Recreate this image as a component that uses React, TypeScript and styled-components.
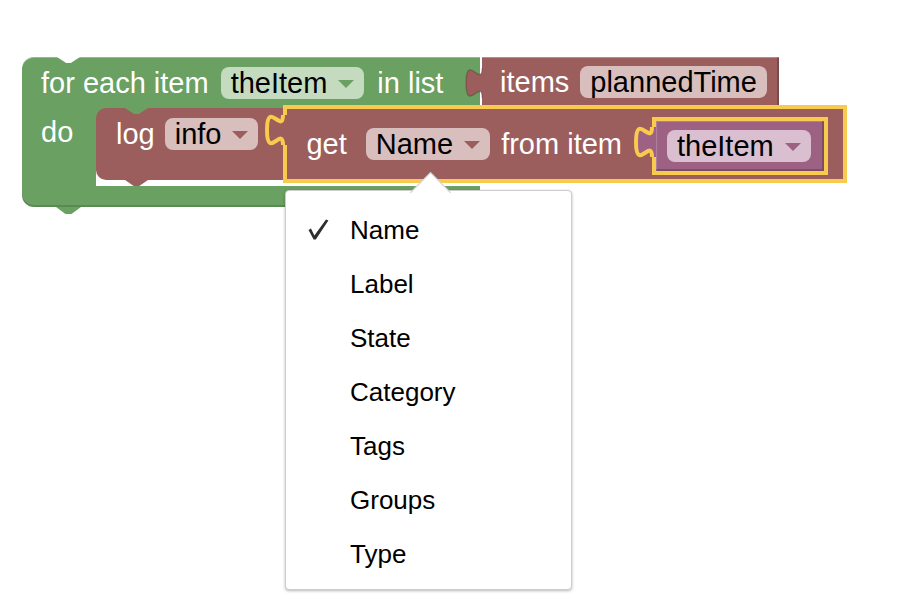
import React from "react";
import styled, { createGlobalStyle, css } from "styled-components";

const GREEN = "#6aa061";
const RED = "#9b5e5c";
const PURPLE = "#9c6183";
const YELLOW = "#f8ca4e";

const GlobalStyle = createGlobalStyle`
  body {
    margin: 0;
    background: #fff;
    font-family: "Liberation Sans", Arial, sans-serif;
  }
`;

const Workspace = styled.div`
  position: relative;
  width: 924px;
  height: 612px;
  overflow: hidden;
  background: #fff;
`;

const lightTop = css`
  box-shadow: inset 0 1px 0 rgba(255, 255, 255, 0.28);
`;

// for-each block sits on the canvas at its own coordinates
const LoopBlock = styled.div`
  position: absolute;
  left: 22px;
  top: 57px;
  display: flex;
  flex-direction: column;
  align-items: flex-start;
`;

const LoopRow = styled.div`
  display: flex;
  align-items: flex-start;
`;

const LoopHead = styled.div`
  position: relative;
  display: flex;
  align-items: flex-start;
  width: 458px;
  height: 51px;
  box-sizing: border-box;
  padding: 10px 0 0 19px;
  background: ${GREEN};
  border-radius: 12px 0 0 0;
  ${lightTop}

  &::before {
    content: "";
    position: absolute;
    top: 0;
    left: 35px;
    width: 23px;
    height: 6px;
    background: #fff;
    clip-path: polygon(0 0, 100% 0, 60% 100%, 40% 100%);
  }
`;

const LoopArm = styled.div`
  width: 74px;
  height: 78px;
  box-sizing: border-box;
  padding: 8px 0 0 19px;
  background: ${GREEN};
`;

const StatementSlot = styled.div`
  display: flex;
  align-items: flex-start;
  height: 78px;
  background: linear-gradient(${GREEN} 0 24px, transparent 24px);
`;

const LoopFoot = styled.div`
  position: relative;
  width: 458px;
  height: 21px;
  background: ${GREEN};
  border-radius: 0 0 0 12px;
  box-shadow: inset 0 -2px 0 rgba(0, 0, 0, 0.14);

  &::after {
    content: "";
    position: absolute;
    top: 100%;
    left: 34px;
    width: 25px;
    height: 7px;
    background: ${GREEN};
    clip-path: polygon(0 0, 100% 0, 62% 100%, 38% 100%);
  }
`;

const Label = styled.span<{ $gap?: number }>`
  margin-left: ${(p) => p.$gap ?? 0}px;
  color: #fff;
  font-size: 29px;
  line-height: 32px;
  white-space: nowrap;
`;

const Field = styled.span<{ $tint: string; $gap?: number }>`
  display: inline-flex;
  align-items: center;
  gap: 11px;
  flex: none;
  height: 32px;
  margin-left: ${(p) => p.$gap ?? 0}px;
  padding: 0 10px;
  border-radius: 8px;
  background: ${(p) => p.$tint};
  color: #000;
  font-size: 29px;
  line-height: 32px;
  white-space: nowrap;
`;

const Caret = styled.span<{ $color: string }>`
  width: 0;
  height: 0;
  margin-top: 2px;
  border-left: 8px solid transparent;
  border-right: 8px solid transparent;
  border-top: 8px solid ${(p) => p.$color};
`;

const ValueBlock = styled.div`
  position: relative;
  display: flex;
  align-items: flex-start;
  height: 48px;
  box-sizing: border-box;
  margin-left: 2px;
  padding: 9px 12px 0 18px;
  background: ${RED};
  box-shadow: inset 0 1px 0 rgba(255, 255, 255, 0.28),
    inset -2px 0 0 rgba(0, 0, 0, 0.2);
`;

const LogBlock = styled.div`
  position: relative;
  display: flex;
  align-items: flex-start;
  height: 72px;
  box-sizing: border-box;
  padding: 10px 0 0 20px;
  background: ${RED};
  border-radius: 10px 0 0 10px;

  &::before {
    content: "";
    position: absolute;
    top: 0;
    left: 29px;
    width: 23px;
    height: 6px;
    background: ${GREEN};
    clip-path: polygon(0 0, 100% 0, 60% 100%, 40% 100%);
  }

  &::after {
    content: "";
    position: absolute;
    top: 100%;
    left: 29px;
    width: 23px;
    height: 6px;
    background: ${RED};
    clip-path: polygon(0 0, 100% 0, 62% 100%, 38% 100%);
  }
`;

const GetBlock = styled.div<{ $gap: number }>`
  position: relative;
  display: flex;
  align-items: center;
  height: 78px;
  box-sizing: border-box;
  margin: -13px 0 0 ${(p) => p.$gap}px;
  padding: 0 15px 0 19px;
  border: 4px solid ${YELLOW};
  background: ${RED};
`;

const VariableBlock = styled.div<{ $gap: number }>`
  position: relative;
  display: flex;
  align-items: center;
  align-self: flex-start;
  height: 58px;
  box-sizing: border-box;
  margin: 8px 0 0 ${(p) => p.$gap}px;
  padding: 0 13px 0 11px;
  border: 4px solid ${YELLOW};
  background: ${PURPLE};
  box-shadow: inset -2px -2px 0 rgba(0, 0, 0, 0.2),
    inset 1px 1px 0 rgba(255, 255, 255, 0.2);
`;

const TabShape = styled.svg<{ $top: number; $left: number }>`
  position: absolute;
  top: ${(p) => p.$top}px;
  left: ${(p) => p.$left}px;
  overflow: visible;
`;

// jigsaw tab on the left side of a value block
function Tab({
  fill,
  top,
  left,
  outlined,
}: {
  fill: string;
  top: number;
  left: number;
  outlined?: boolean;
}) {
  return (
    <TabShape $top={top} $left={left} width="24" height="34" viewBox="0 0 24 34">
      <path d="M24 2H20c0 20-16-16-16 15s16-5 16 15H24Z" fill={fill} />
      {outlined ? (
        <path
          d="M20 2c0 20-16-16-16 15s16-5 16 15"
          fill="none"
          stroke={YELLOW}
          strokeWidth="4"
        />
      ) : (
        <path
          d="M20 2c0 20-16-16-16 15s16-5 16 15"
          fill="none"
          stroke="rgba(0,0,0,0.18)"
          strokeWidth="1.5"
        />
      )}
    </TabShape>
  );
}

function Dropdown({
  text,
  tint,
  caret,
  gap,
}: {
  text: string;
  tint: string;
  caret?: string;
  gap?: number;
}) {
  return (
    <Field $tint={tint} $gap={gap}>
      {text}
      {caret && <Caret $color={caret} />}
    </Field>
  );
}

const Menu = styled.div`
  position: absolute;
  left: 285px;
  top: 190px;
  z-index: 10;
  width: 287px;
  height: 400px;
  box-sizing: border-box;
  padding-top: 12px;
  background: #fff;
  border: 1px solid #cdcdcd;
  border-radius: 4px;
  box-shadow: 0 1px 3px rgba(0, 0, 0, 0.28);

  &::before {
    content: "";
    position: absolute;
    left: 130px;
    top: -13px;
    width: 28px;
    height: 28px;
    background: #fff;
    border-left: 1px solid #cdcdcd;
    border-top: 1px solid #cdcdcd;
    transform: rotate(45deg);
  }
`;

const MenuList = styled.ul`
  position: relative;
  margin: 0;
  padding: 0;
  list-style: none;
`;

const MenuItem = styled.li`
  position: relative;
  height: 54px;
  padding-left: 64px;
  color: #000;
  font-size: 26px;
  line-height: 54px;
`;

const Check = styled.svg`
  position: absolute;
  left: 22px;
  top: 16px;
`;

const options = ["Name", "Label", "State", "Category", "Tags", "Groups", "Type"];

export default function App() {
  return (
    <>
      <GlobalStyle />
      <Workspace>
        <LoopBlock>
          <LoopRow>
            <LoopHead>
              <Label>for each item</Label>
              <Dropdown text="theItem" tint="#c5dbc0" caret={GREEN} gap={12} />
              <Label $gap={13}>in list</Label>
            </LoopHead>
            <ValueBlock>
              <Tab fill={RED} top={9} left={-20} />
              <Label>items</Label>
              <Dropdown text="plannedTime" tint="#d8bebd" gap={11} />
            </ValueBlock>
          </LoopRow>
          <LoopRow>
            <LoopArm>
              <Label>do</Label>
            </LoopArm>
            <StatementSlot>
              <LogBlock>
                <Label>log</Label>
                <Dropdown text="info" tint="#d8bebd" caret={RED} gap={10} />
                <GetBlock $gap={25}>
                  <Tab fill={RED} top={4} left={-24} outlined />
                  <Label>get</Label>
                  <Dropdown text="Name" tint="#d8bebd" caret={RED} gap={19} />
                  <Label $gap={11}>from item</Label>
                  <VariableBlock $gap={30}>
                    <Tab fill={PURPLE} top={4} left={-24} outlined />
                    <Dropdown text="theItem" tint="#d9bfd0" caret={PURPLE} />
                  </VariableBlock>
                </GetBlock>
              </LogBlock>
            </StatementSlot>
          </LoopRow>
          <LoopFoot />
        </LoopBlock>

        <Menu>
          <MenuList>
            {options.map((name, i) => (
              <MenuItem key={name}>
                {i === 0 && (
                  <Check width="22" height="22" viewBox="0 0 22 22">
                    <path
                      d="M0.5 11 L3 9.6 L6.4 16.4 L18 0.6 L20.4 1.6 L7.8 20.6 L5.6 20.6 Z"
                      fill="#2e2e2e"
                    />
                  </Check>
                )}
                {name}
              </MenuItem>
            ))}
          </MenuList>
        </Menu>
      </Workspace>
    </>
  );
}
